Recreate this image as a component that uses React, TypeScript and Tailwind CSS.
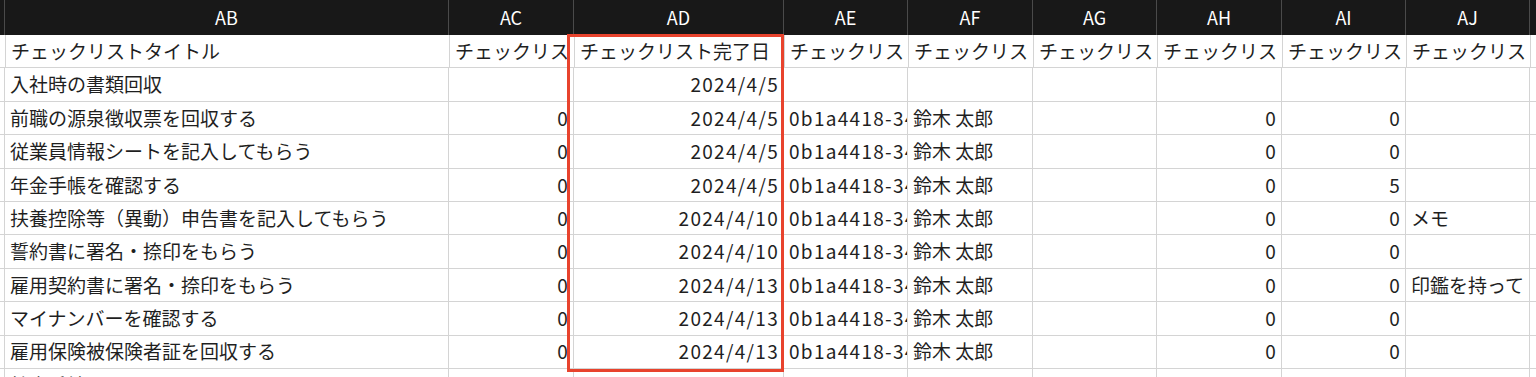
import React from 'react';

type Col = { key: string; width: string; align: 'left' | 'right' };

// 列幅はスクリーンショットから実測
const COLS: Col[] = [
  { key: 'AA', width: 'w-[5px]', align: 'right' },
  { key: 'AB', width: 'w-[444px]', align: 'left' },
  { key: 'AC', width: 'w-[125px]', align: 'right' },
  { key: 'AD', width: 'w-[210px]', align: 'right' },
  { key: 'AE', width: 'w-[124px]', align: 'left' },
  { key: 'AF', width: 'w-[125px]', align: 'left' },
  { key: 'AG', width: 'w-[124px]', align: 'left' },
  { key: 'AH', width: 'w-[125px]', align: 'right' },
  { key: 'AI', width: 'w-[124px]', align: 'right' },
  { key: 'AJ', width: 'w-[124px]', align: 'left' },
  { key: 'AK', width: 'w-[124px]', align: 'left' },
];

const UUID = '0b1a4418-34c2-4f7e-9a1d';
const NAME = '鈴木 太郎';

const TITLE_ROW = [
  '',
  'チェックリストタイトル',
  'チェックリスト項目ID',
  'チェックリスト完了日',
  'チェックリスト担当者ID',
  'チェックリスト担当者名',
  'チェックリスト備考',
  'チェックリスト順番',
  'チェックリスト期限',
  'チェックリストメモ',
  'チェックリスト',
];

const ROWS: string[][] = [
  ['', '入社時の書類回収', '', '2024/4/5', '', '', '', '', '', '', ''],
  ['', '前職の源泉徴収票を回収する', '0', '2024/4/5', UUID, NAME, '', '0', '0', '', ''],
  ['', '従業員情報シートを記入してもらう', '0', '2024/4/5', UUID, NAME, '', '0', '0', '', ''],
  ['', '年金手帳を確認する', '0', '2024/4/5', UUID, NAME, '', '0', '5', '', ''],
  ['', '扶養控除等（異動）申告書を記入してもらう', '0', '2024/4/10', UUID, NAME, '', '0', '0', 'メモ', ''],
  ['', '誓約書に署名・捺印をもらう', '0', '2024/4/10', UUID, NAME, '', '0', '0', '', ''],
  ['', '雇用契約書に署名・捺印をもらう', '0', '2024/4/13', UUID, NAME, '', '0', '0', '印鑑を持って', ''],
  ['', 'マイナンバーを確認する', '0', '2024/4/13', UUID, NAME, '', '0', '0', '', ''],
  ['', '雇用保険被保険者証を回収する', '0', '2024/4/13', UUID, NAME, '', '0', '0', '', ''],
  ['', '社内手続き', '', '2024/4/15', '', '', '', '', '', '', ''],
];

const isAscii = (s: string) => /^[\x20-\x7e]+$/.test(s);

function Cell({ col, text, left }: { col: Col; text: string; left?: boolean }) {
  const right = !left && col.align === 'right';
  return (
    <div
      className={`${col.width} shrink-0 h-full border-r border-[#d4d4d4] overflow-hidden whitespace-nowrap flex items-center ${
        right ? 'justify-end pr-[4px]' : 'justify-start pl-[5px]'
      } ${isAscii(text) ? 'tracking-[1.3px]' : ''}`}
    >
      {text}
    </div>
  );
}

function DataRow({ cells, left }: { cells: string[]; left?: boolean }) {
  return (
    <div className="flex h-[33.4px] border-b border-[#d4d4d4]">
      {COLS.map((col, i) => (
        <Cell key={col.key} col={col} text={cells[i]} left={left} />
      ))}
    </div>
  );
}

export default function App() {
  return (
    <div
      className="relative w-[1536px] h-[377px] overflow-hidden bg-white text-[19px] text-[#1f1f1f]"
      style={{ fontFamily: '"Noto Sans CJK JP", "Noto Sans", sans-serif' }}
    >
      {/* 列見出し */}
      <div className="flex h-[35px] bg-[#181818] text-white text-[18px]">
        {COLS.map((col) => (
          <div
            key={col.key}
            className={`${col.width} shrink-0 h-full border-r border-[#4a4a4a] flex items-center justify-center`}
          >
            {col.key === 'AA' || col.key === 'AK' ? '' : col.key}
          </div>
        ))}
      </div>

      <DataRow cells={TITLE_ROW} left />
      {ROWS.map((r, i) => (
        <DataRow key={i} cells={r} />
      ))}

      {/* 完了日列の強調枠 */}
      <div className="absolute left-[567px] top-[34px] w-[217px] h-[338px] border-[3px] border-[#e8432d] pointer-events-none" />
    </div>
  );
}
